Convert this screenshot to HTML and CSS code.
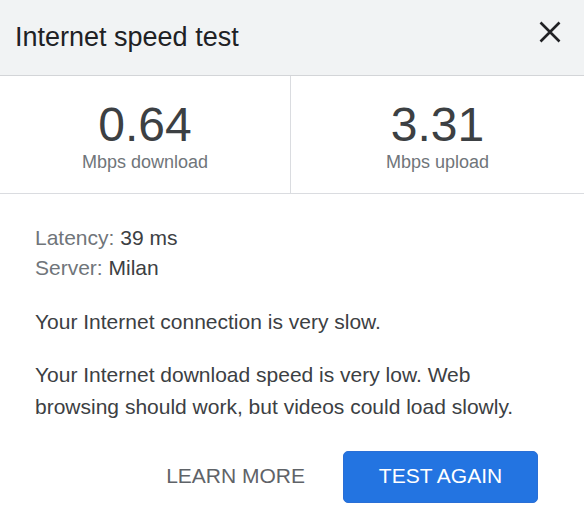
FILE: index.html
```
<!DOCTYPE html>
<html>
<head>
<meta charset="utf-8">
<link rel="stylesheet" href="styles.css">
</head>
<body>
<div class="dialog">
  <header class="header">
    <h1 class="title">Internet speed test</h1>
    <button class="close" aria-label="Close">
      <svg width="22" height="22" viewBox="0 0 22 22"><path d="M1.5 1.5L20.5 20.5M20.5 1.5L1.5 20.5" stroke="#202124" stroke-width="2.6" fill="none"/></svg>
    </button>
  </header>
  <section class="stats">
    <div class="stat">
      <div class="value">0.64</div>
      <div class="unit">Mbps download</div>
    </div>
    <div class="stat">
      <div class="value">3.31</div>
      <div class="unit">Mbps upload</div>
    </div>
  </section>
  <section class="body">
    <div class="meta">
      <div><span class="key">Latency:</span> 39 ms</div>
      <div><span class="key">Server:</span> Milan</div>
    </div>
    <p class="para">Your Internet connection is very slow.</p>
    <p class="para">Your Internet download speed is very low. Web browsing should work, but videos could load slowly.</p>
    <div class="actions">
      <button class="btn-text">LEARN MORE</button>
      <button class="btn-primary">TEST AGAIN</button>
    </div>
  </section>
</div>
</body>
</html>
```
FILE: styles.css
```
* { box-sizing: border-box; }
html, body { margin: 0; padding: 0; background: #fff; }
body { font-family: "Liberation Sans", Arial, sans-serif; width: 584px; height: 530px; overflow: hidden; }
.dialog { width: 584px; }
.header {
  height: 76px;
  background: #f1f3f4;
  border-bottom: 1px solid #d3d5d8;
  display: flex;
  align-items: flex-start;
  padding: 21px 23px 0 15px;
}
.title {
  margin: 1px 0 0 0;
  font-size: 27px;
  font-weight: normal;
  line-height: 30px;
  color: #202124;
}
.close {
  margin-left: auto;
  background: none;
  border: 0;
  padding: 0;
  width: 22px;
  height: 22px;
  display: block;
}
.close svg { display: block; }
.stats {
  display: grid;
  grid-template-columns: 290px 1fr;
  border-bottom: 1px solid #dadce0;
}
.stat {
  text-align: center;
  padding: 22px 0 21px;
}
.stat + .stat { border-left: 1px solid #dadce0; }
.value {
  font-size: 48px;
  line-height: 54px;
  color: #3c4043;
}
.unit {
  font-size: 18px;
  line-height: 20px;
  color: #70757a;
}
.body {
  padding: 29px 46px 0 35px;
  color: #3c4043;
  font-size: 21px;
}
.meta { line-height: 30px; color: #3c4043; }
.key { color: #70757a; }
.para { margin: 21px 0 0; line-height: 32px; }
.meta + .para { margin-top: 23px; }
.actions {
  margin-top: 28px;
  display: flex;
  justify-content: flex-end;
  align-items: center;
  gap: 14px;
}
.btn-text {
  background: none;
  border: 0;
  font-family: inherit;
  font-size: 21px;
  color: #5f6368;
  padding: 0 24px 3px;
  height: 52px;
}
.btn-primary {
  font-family: inherit;
  font-size: 21px;
  color: #fff;
  background: #2374e1;
  border: 1px solid #2a6fd6;
  border-radius: 5px;
  height: 52px;
  width: 195px;
  padding: 0 0 3px;
}
```
